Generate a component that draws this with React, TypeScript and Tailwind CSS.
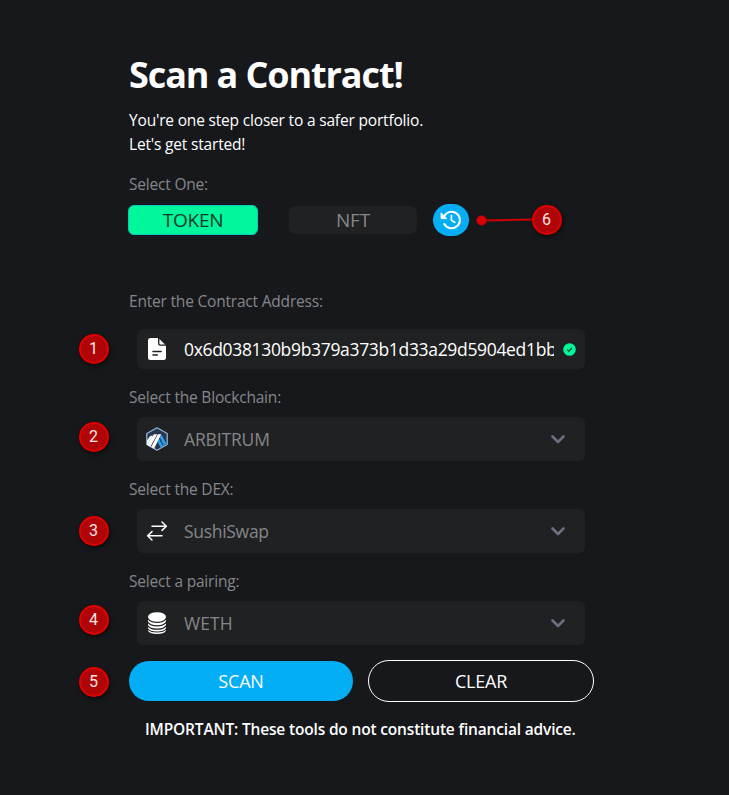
import React from "react";

function HistoryIcon() {
  return (
    <svg width="22" height="22" viewBox="0 0 22 22" fill="none" stroke="#fff">
      <path d="M4.2 7.2A8.3 8.3 0 1 1 4.3 15" strokeWidth="2" strokeLinecap="round" />
      <path d="M1 3.8V9.7H7Z" fill="#fff" strokeWidth=".8" strokeLinejoin="round" />
      <path d="M11.4 6.5V11.3L14.9 13.4" strokeWidth="1.7" strokeLinecap="round" strokeLinejoin="round" />
    </svg>
  );
}

function FileIcon() {
  return (
    <svg width="18" height="22" viewBox="0 0 18 22">
      <path fill="#fff" d="M2.5 0H10v5.5A2.3 2.3 0 0 0 12.3 7.8H18V19.5A2.3 2.3 0 0 1 15.7 22H2.3A2.3 2.3 0 0 1 0 19.5V2.5A2.5 2.5 0 0 1 2.5 0Z" />
      <path fill="#fff" d="M11.4 1 17 6.5H12.6A1.2 1.2 0 0 1 11.4 5.3Z" />
      <path stroke="#202122" strokeWidth="1.5" strokeLinecap="round" d="M5 13.5h8.2M5 17h4.3" />
    </svg>
  );
}

function ArbitrumIcon() {
  return (
    <svg width="22" height="24" viewBox="0 0 22 24">
      <path d="M11 .8 21.2 6.5v11L11 23.2.8 17.5v-11Z" fill="#2a364b" stroke="#8fb6dc" strokeWidth="1.3" strokeLinejoin="round" />
      <path fill="#28a0f0" d="m13.8 10.2 1.6-2.6 4.8 8.8-2.4 2.4ZM11.4 14.8l1.6-3 4.2 7.4-2.5 1.4Z" />
      <path fill="#fff" d="M7.9 7.2h3.3L4.4 19.7.9 17.8ZM11.9 7.2h3.3L8 21.7 5.2 20.1Z" />
      <path fill="#fff" d="M1 13.5 4.5 8.8H7L1.2 17.5Z" />
    </svg>
  );
}

function SwapIcon() {
  return (
    <svg width="24" height="24" viewBox="0 0 24 24" fill="none" stroke="#fff" strokeWidth="1.5" strokeLinecap="round" strokeLinejoin="round">
      <path d="M7 21 2.6 16.8 7 12.6M3 16.8h14M17 3l4.4 4.2L17 11.4M21 7.2H7" />
    </svg>
  );
}

function CoinsIcon() {
  return (
    <svg width="18" height="22" viewBox="0 0 18 22">
      <ellipse cx="9" cy="5" rx="9" ry="4.8" fill="#fff" />
      <path
        fill="#fff"
        d="M0 7.8Q3 11 9 11T18 7.8V9.6Q16 13.3 9 13.3T0 9.6ZM0 11.6Q3 14.6 9 14.6T18 11.6V13Q16 16.5 9 16.5T0 13ZM0 14.9Q3 17.8 9 17.8T18 14.9V16.2Q16 19.4 9 19.4T0 16.2ZM0 18Q3 20.5 9 20.5T18 18V18.8Q16 22 9 22T0 18.8Z"
      />
    </svg>
  );
}

function Select({ icon, children }: { icon: React.ReactNode; children: React.ReactNode }) {
  return (
    <div className="ml-2 mt-2 flex h-11 w-[448px] items-center rounded-md bg-[#202122] text-[#85868a]">
      <span className="flex w-10 justify-center">{icon}</span>
      <span className="ml-[7px] flex-1 whitespace-nowrap text-[17.5px]">{children}</span>
      <svg className="mr-5" width="14" height="9" viewBox="0 0 14 9" fill="none" stroke="#6b7080" strokeWidth="2.6" strokeLinecap="round" strokeLinejoin="round">
        <path d="M1.5 1.5 7 7l5.5-5.5" />
      </svg>
    </div>
  );
}

function Label({ children }: { children: React.ReactNode }) {
  return <div className="h-6 whitespace-nowrap text-[15.5px] leading-6 tracking-[-0.2px] text-[#85868a]">{children}</div>;
}

function Marker({ n, className }: { n: number; className: string }) {
  return (
    <div className={`absolute flex size-[30px] items-center justify-center rounded-full border-2 border-[#e00000] bg-[#b00508] pr-px font-['Roboto',sans-serif] text-[16px] text-[#ffe4e4] shadow-[1px_2px_4px_rgba(0,0,0,0.6)] ${className}`}>
      {n}
    </div>
  );
}

export default function App() {
  return (
    <div className="relative h-[795px] w-[729px] overflow-hidden bg-[#17181c] pl-[129px] pt-[51px] font-['Open_Sans','Noto_Sans',sans-serif] text-white">
      <h1 className="h-12 whitespace-nowrap text-[36px] font-bold leading-[48px] tracking-[-1.1px]">Scan a Contract!</h1>
      <p className="mt-[9px] whitespace-nowrap text-[15.5px] leading-6 tracking-[-0.18px]">
        You're one step closer to a safer portfolio.
        <br />
        Let's get started!
      </p>
      <div className="mt-4">
        <Label>Select One:</Label>
      </div>
      <div className="-ml-px mt-[8px] flex h-8 items-center text-[19px] tracking-[-0.2px]">
        <button className="flex h-[30px] w-[130px] items-center justify-center rounded-md border border-[#00cfc0] bg-[#00f79b] pt-px text-[#15372b]">
          TOKEN
        </button>
        <button className="ml-[31px] flex h-7 w-32 items-center justify-center rounded-md bg-[#202122] pt-px text-[#85868a]">
          NFT
        </button>
        <button className="ml-4 flex h-8 w-9 items-center justify-center rounded-full bg-[#03aef5]">
          <HistoryIcon />
        </button>
      </div>

      <div className="mt-[53px]">
        <Label>Enter the Contract Address:</Label>
      </div>
      <div className="ml-2 mt-4 flex h-10 w-[448px] items-center rounded-md bg-[#202122]">
        <span className="flex w-10 justify-center"><FileIcon /></span>
        <span className="ml-[7px] w-[370px] overflow-hidden whitespace-nowrap text-[17.5px] tracking-[-0.33px]">0x6d038130b9b379a373b1d33a29d5904ed1bb</span>
        <svg className="ml-[9px]" width="13" height="13" viewBox="0 0 13 13" fill="none">
          <circle cx="6.5" cy="6.5" r="6.3" fill="#00f79b" />
          <path d="m4.2 6.6 1.7 1.6 3-3.2" stroke="#173b30" strokeWidth="1.2" />
        </svg>
      </div>

      <div className="mt-4">
        <Label>Select the Blockchain:</Label>
      </div>
      <Select icon={<ArbitrumIcon />}><span className="tracking-[-0.15px]">ARBITRUM</span></Select>

      <div className="mt-4">
        <Label>Select the DEX:</Label>
      </div>
      <Select icon={<SwapIcon />}><span className="tracking-[-0.3px]">SushiSwap</span></Select>

      <div className="mt-4">
        <Label>Select a pairing:</Label>
      </div>
      <Select icon={<CoinsIcon />}><span className="tracking-[0.1px]">WETH</span></Select>

      <div className="mt-[15px] flex items-center text-[18px] tracking-[-0.2px]">
        <button className="flex h-10 w-56 items-center justify-center rounded-full bg-[#03aef5]">
          SCAN
        </button>
        <button className="ml-[15px] flex h-[42px] w-[226px] items-center justify-center rounded-full border border-white">
          CLEAR
        </button>
      </div>
      <p className="ml-4 mt-[15px] whitespace-nowrap text-[15.5px] font-semibold leading-6 tracking-[-0.17px]">
        IMPORTANT: These tools do not constitute financial advice.
      </p>

      <svg className="absolute left-[476px] top-[212px]" width="60" height="16" viewBox="0 0 60 16">
        <path d="M5.5 8.5 58 7.5" stroke="#d00004" strokeWidth="2" />
        <circle cx="5.5" cy="8.5" r="5" fill="#d60004" />
      </svg>
      <Marker n={6} className="left-[532px] top-[205px]" />
      <Marker n={1} className="left-[79px] top-[334px]" />
      <Marker n={2} className="left-[79px] top-[422px]" />
      <Marker n={3} className="left-[79px] top-[516px]" />
      <Marker n={4} className="left-[79px] top-[605px]" />
      <Marker n={5} className="left-[79px] top-[667px]" />
    </div>
  );
}
